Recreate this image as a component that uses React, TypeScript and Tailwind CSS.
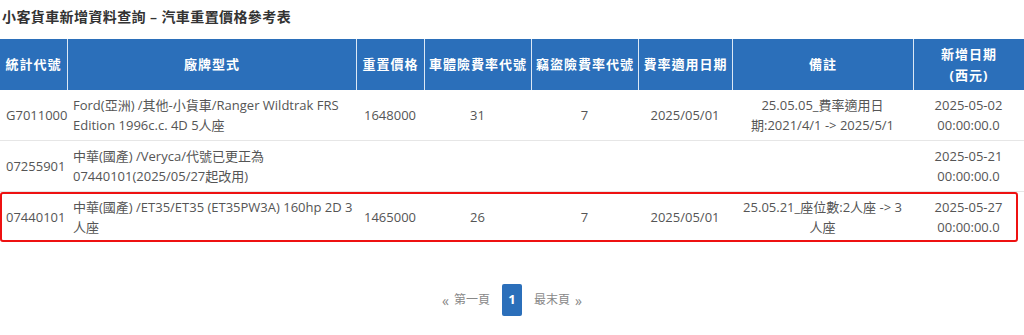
import React from "react";

const cols = "grid grid-cols-[67px_289px_68px_107px_107px_94px_181px_111px]";

const headers = [
  "統計代號",
  "廠牌型式",
  "重置價格",
  "車體險費率代號",
  "竊盜險費率代號",
  "費率適用日期",
  "備註",
  "新增日期\n(西元)",
];

type Row = {
  code: string;
  model: string;
  price: string;
  body: string;
  theft: string;
  rateDate: string;
  note: string;
  added: string;
};

const rows: Row[] = [
  {
    code: "G7011000",
    model: "Ford(亞洲) /其他-小貨車/Ranger Wildtrak FRS Edition 1996c.c. 4D 5人座",
    price: "1648000",
    body: "31",
    theft: "7",
    rateDate: "2025/05/01",
    note: "25.05.05_費率適用日期:2021/4/1 -> 2025/5/1",
    added: "2025-05-02 00:00:00.0",
  },
  {
    code: "07255901",
    model: "中華(國產) /Veryca/代號已更正為07440101(2025/05/27起改用)",
    price: "",
    body: "",
    theft: "",
    rateDate: "",
    note: "",
    added: "2025-05-21 00:00:00.0",
  },
  {
    code: "07440101",
    model: "中華(國產) /ET35/ET35 (ET35PW3A) 160hp 2D 3人座",
    price: "1465000",
    body: "26",
    theft: "7",
    rateDate: "2025/05/01",
    note: "25.05.21_座位數:2人座 -> 3人座",
    added: "2025-05-27 00:00:00.0",
  },
];

function DataRow({ row, last }: { row: Row; last?: boolean }) {
  return (
    <div className={`${cols} min-h-[50px] items-center py-[5px] text-[13px] leading-[20px] text-[#555] ${last ? "" : "border-b border-[#e6e6e6]"}`}>
      <div className="pl-[6px]">{row.code}</div>
      <div className="pl-[6px] pr-[2px]">{row.model}</div>
      <div className="text-center">{row.price}</div>
      <div className="text-center">{row.body}</div>
      <div className="text-center">{row.theft}</div>
      <div className="text-center">{row.rateDate}</div>
      <div className="px-[6px] text-center">{row.note}</div>
      <div className="px-[18px] text-center">{row.added}</div>
    </div>
  );
}

export default function App() {
  return (
    <div
      className="h-[335px] w-[1024px] overflow-hidden bg-white"
      style={{ fontFamily: '"Open Sans", "Noto Sans CJK TC", sans-serif' }}
    >
      <h1 className="pl-[2px] pt-[7px] text-[14px] font-semibold leading-[20px] tracking-[0.4px] text-[#333]">
        小客貨車新增資料查詢 – 汽車重置價格參考表
      </h1>

      <div className="mt-[12px]">
        <div className={`${cols} h-[51px] bg-[#2b6fba] text-[13px] font-bold leading-[21px] tracking-[1px] text-white`}>
          {headers.map((h, i) => (
            <div
              key={h}
              className={`flex items-center justify-center whitespace-pre-line text-center ${i > 0 ? "border-l border-[#dce8f5]" : ""}`}
            >
              {h}
            </div>
          ))}
        </div>

        <DataRow row={rows[0]} />
        <DataRow row={rows[1]} />
        <div className="relative">
          <DataRow row={rows[2]} last />
          <div className="pointer-events-none absolute inset-y-0 left-0 right-[6px] rounded-[3px] border-2 border-[#ee1111]" />
        </div>
      </div>

      <div className="mt-[42px] flex items-center justify-center text-[12px] text-[#888]">
        <span className="mr-[5px] text-[14px]">«</span>
        <span>第一頁</span>
        <span className="mx-[12px] flex h-[32px] w-[20px] items-center justify-center rounded-[2px] bg-[#2b6fba] text-[13px] font-bold text-white">
          1
        </span>
        <span>最末頁</span>
        <span className="ml-[5px] text-[14px]">»</span>
      </div>
    </div>
  );
}
